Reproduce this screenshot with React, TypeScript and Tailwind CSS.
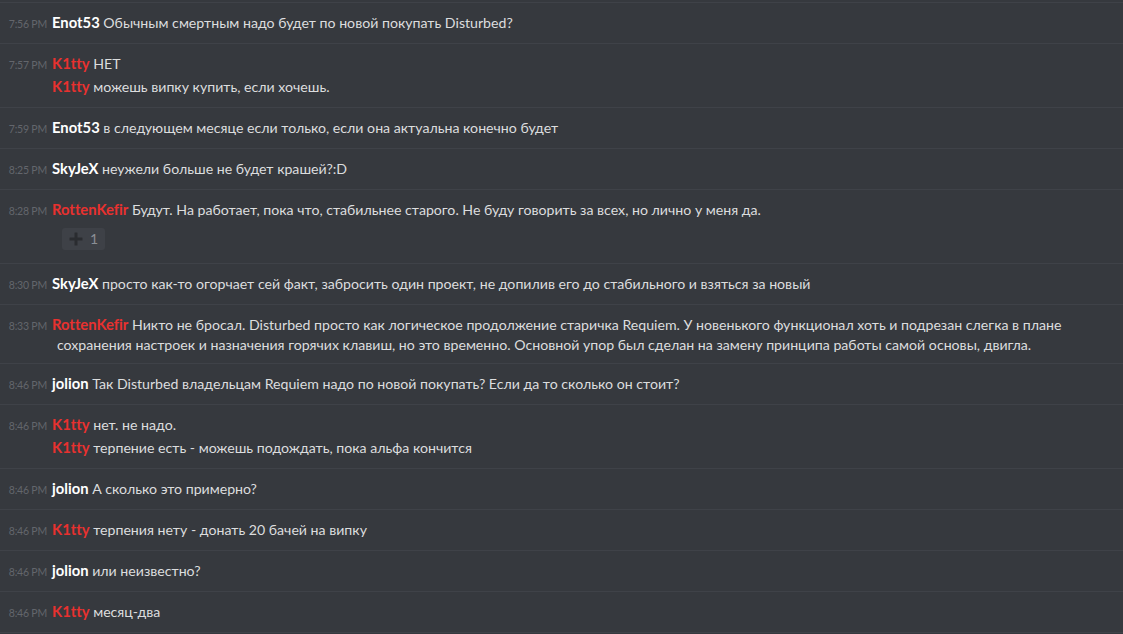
import React from "react";

type Msg = { name: string; red?: boolean; text: React.ReactNode };
type Group = { time: string; msgs: Msg[]; reaction?: boolean; tight?: boolean };

const groups: Group[] = [
  { time: "7:56 PM", msgs: [{ name: "Enot53", text: "Обычным смертным надо будет по новой покупать Disturbed?" }] },
  {
    time: "7:57 PM",
    msgs: [
      { name: "K1tty", red: true, text: "НЕТ" },
      { name: "K1tty", red: true, text: "можешь випку купить, если хочешь." },
    ],
  },
  { time: "7:59 PM", msgs: [{ name: "Enot53", text: "в следующем месяце если только, если она актуальна конечно будет" }] },
  { time: "8:25 PM", msgs: [{ name: "SkyJeX", text: "неужели больше не будет крашей?:D" }] },
  {
    time: "8:28 PM",
    reaction: true,
    msgs: [
      {
        name: "RottenKefir",
        red: true,
        text: "Будут. На работает, пока что, стабильнее старого. Не буду говорить за всех, но лично у меня да.",
      },
    ],
  },
  {
    time: "8:30 PM",
    msgs: [
      {
        name: "SkyJeX",
        text: "просто как-то огорчает сей факт, забросить один проект, не допилив его до стабильного и взяться за новый",
      },
    ],
  },
  {
    time: "8:33 PM",
    tight: true,
    msgs: [
      {
        name: "RottenKefir",
        red: true,
        text: (
          <>
            Никто не бросал. Disturbed просто как логическое продолжение старичка Requiem. У новенького функционал хоть и подрезан слегка в плане
            <br />
            сохранения настроек и назначения горячих клавиш, но это временно. Основной упор был сделан на замену принципа работы самой основы, двигла.
          </>
        ),
      },
    ],
  },
  {
    time: "8:46 PM",
    msgs: [{ name: "jolion", text: "Так Disturbed владельцам Requiem надо по новой покупать? Если да то сколько он стоит?" }],
  },
  {
    time: "8:46 PM",
    msgs: [
      { name: "K1tty", red: true, text: "нет. не надо." },
      { name: "K1tty", red: true, text: "терпение есть - можешь подождать, пока альфа кончится" },
    ],
  },
  { time: "8:46 PM", msgs: [{ name: "jolion", text: "А сколько это примерно?" }] },
  { time: "8:46 PM", msgs: [{ name: "K1tty", red: true, text: "терпения нету - донать 20 бачей на випку" }] },
  { time: "8:46 PM", msgs: [{ name: "jolion", text: "или неизвестно?" }] },
  { time: "8:46 PM", msgs: [{ name: "K1tty", red: true, text: "месяц-два" }] },
];

function PlusIcon() {
  return (
    <svg width="14" height="14" viewBox="0 0 14 14">
      <rect x="5.5" y="0.5" width="3" height="13" rx="0.5" fill="#2a2c30" />
      <rect x="0.5" y="5.5" width="13" height="3" rx="0.5" fill="#2a2c30" />
    </svg>
  );
}

export default function App() {
  return (
    <div className="bg-[#36393e] w-[1123px] h-[634px] overflow-hidden font-['Lato','Noto_Sans',sans-serif] [font-variant-ligatures:none]">
      <div className="h-[3px] border-b border-[#3f4248]" />
      {groups.map((g, gi) => (
        <div
          key={gi}
          className={
            "border-b border-[#3f4248] pt-[10px] " +
            (g.reaction ? "pb-[13px]" : g.tight ? "pb-[8px]" : "pb-[10px]")
          }
        >
          {g.msgs.map((m, mi) => (
            <div
              key={mi}
              className={
                "pl-[57px] pr-4 indent-[-49px] leading-[20px] text-[14.15px] text-[#dcddde] " +
                (mi > 0 ? "mt-[3px]" : "")
              }
            >
              <span
                className={
                  "inline-block indent-0 whitespace-nowrap w-[39px] mr-[5px] text-right text-[10.5px] leading-none tracking-[-0.2px] text-[#63666c] " +
                  (mi > 0 ? "invisible" : "")
                }
              >
                {g.time}
              </span>
              <span className={"font-bold text-[14.8px] leading-none " + (m.red ? "text-[#e8312f]" : "text-white")}>
                {m.name}
              </span>{" "}
              <span>{m.text}</span>
            </div>
          ))}
          {g.reaction && (
            <div className="ml-[62px] mt-2 flex">
              <div className="h-[22px] w-[43px] rounded-[3px] bg-[#3e4147] flex items-center pl-[7px] gap-[7px]">
                <PlusIcon />
                <span className="text-[14px] text-[#8b8f95] leading-none">1</span>
              </div>
            </div>
          )}
        </div>
      ))}
    </div>
  );
}
